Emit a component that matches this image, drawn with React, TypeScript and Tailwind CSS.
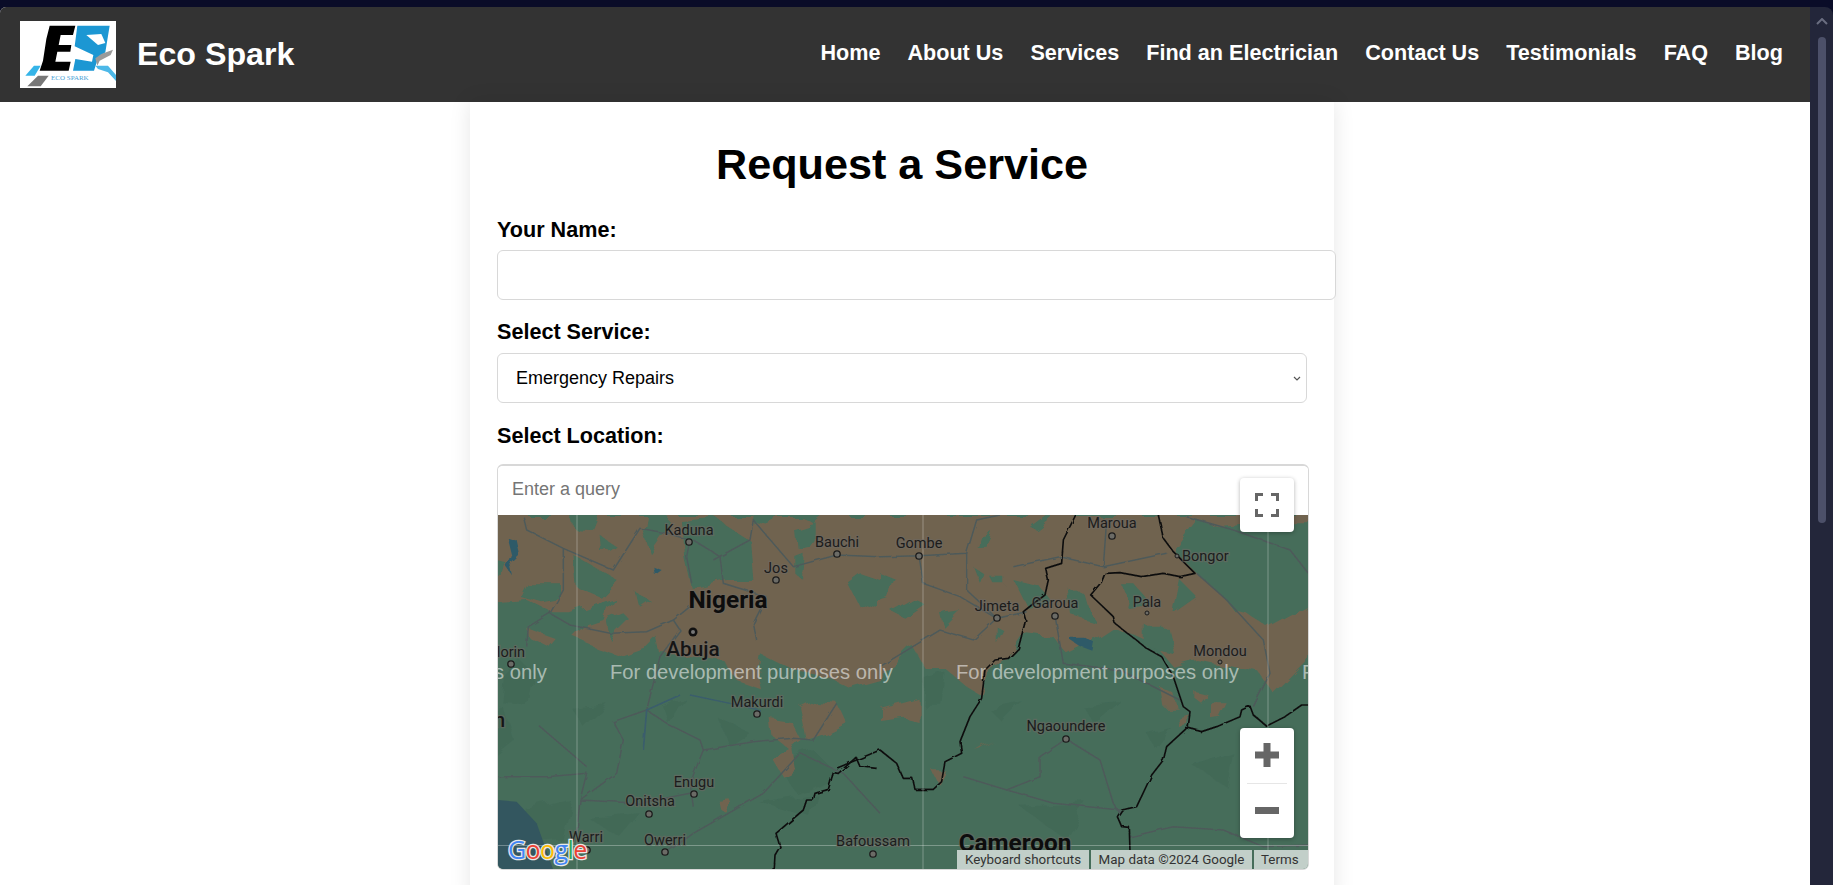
const brownLeft = [
  "60,225 1260,225 1260,720 1170,745 1120,720 1060,700 1000,690 900,640 890,700 900,745 830,720 790,660 720,650 650,640 600,640 590,590 560,620 490,645 400,615 340,590 370,560 430,540 460,470 330,520 280,520 200,480 60,490",
  "205,570 290,600 270,625 210,595",
  "1020,800 1060,780 1130,785 1160,850 1100,880 1040,900",
  "935,840 1000,850 1030,910 1000,930 1010,990 970,1010 940,960 990,930 940,890",
  "770,1080 805,1075 815,1090 795,1115 775,1100",
];

const greenLeft = [
  "330,215 420,215 400,265 340,262",
  "425,290 470,320 430,345",
  "560,215 640,215 620,270 570,340 550,270",
  "660,240 760,230 870,300 880,420 800,420 720,440 690,440 670,350",
  "340,345 470,420 420,470 350,440",
  "880,215 950,215 930,260 880,250",
  "1005,270 1070,250 1070,310 1010,320",
  "1000,345 1025,335 1020,410 1000,395",
  "60,350 140,370 130,410 60,410",
  "200,430 300,430 300,480 250,490 180,470",
  "440,540 490,520 510,540 450,600",
  "1160,430 1200,400 1260,420 1260,510 1190,490",
  "530,460 570,480 540,500",
  "1010,220 1100,220 1060,250",
];

const brownRight = [
  "0,225 1300,225 1300,250 1100,250 1000,260 950,240 880,330 950,400 1030,470 1060,510 1100,520 1170,570 1300,500 1300,640 1180,760 1140,700 1050,680 950,660 880,680 830,620 700,560 640,600 560,640 520,590 440,580 400,640 340,680 310,770 260,740 200,690 140,690 100,620 40,680 0,690",
  "0,800 110,770 110,840 70,830 0,840",
  "940,750 980,760 960,785 940,770",
  "990,790 1040,790 1020,830 990,835",
  "840,740 880,760 890,800 850,800",
  "285,930 335,900 300,925",
  "150,985 190,985 170,1025",
  "890,830 925,820 925,855 895,860",
];

const greenRight = [
  "300,290 340,280 320,320 290,320",
  "450,260 510,215 540,215 470,270",
  "280,380 310,400 300,430",
  "330,410 370,410 370,430 340,430",
  "400,420 480,440 520,490 440,500",
  "0,400 50,420 30,480 0,490",
  "30,510 100,470 130,490 70,530",
  "180,520 240,510 190,560",
  "350,560 370,570 350,610",
  "720,430 760,430 820,500 750,510",
  "900,420 950,470 880,520",
  "800,560 860,560 880,640 800,620",
  "560,440 620,470 640,540 570,520",
];

const roadsLeft = [
  "190,230 200,270 310,325 460,390 540,265 620,280 690,300 680,350 695,430",
  "310,325 310,450 270,520 205,560 200,620",
  "270,520 330,555 450,580 560,575 640,540 690,500",
  "640,540 660,570 600,650 560,810 620,850 720,900 730,930 690,1030 700,1100",
  "560,810 460,845 490,900 470,1000 360,1080 350,1180",
  "730,930 880,905 1000,895 1060,900 1130,790",
  "115,1010 260,1010 380,1000 360,1080 540,1090 690,1060",
  "760,360 870,300 880,240 1000,380 1130,345 1260,350",
  "890,600 880,550 920,470",
  "700,300 780,350 790,430 920,470",
  "910,1060 1020,940 1150,1000 1260,1120",
  "240,860 380,980",
  "615,1240 700,1180 910,1060",
];

const roadsRight = [
  "0,350 117,347 130,430 240,470 350,535 440,515",
  "117,347 260,340 290,240 360,225",
  "260,340 260,450 350,535 280,600 180,570 0,680",
  "400,380 540,350 670,380 860,340",
  "525,527 550,670 720,690 900,780",
  "680,240 670,380",
  "558,897 480,950 480,1010 380,1050 250,1010",
  "558,897 660,960 700,1090 720,1120",
  "380,1050 520,1090 720,1110",
  "950,400 1040,480 1150,600 1170,700 1120,800",
  "920,230 1060,270 1230,330 1285,400",
  "750,1190 880,1160 1030,1170 1150,1220 1285,1215",
];

const darkPatches = [
  "180,660 220,700 200,800 130,790 140,700",
  "30,850 130,800 160,900 60,980",
  "330,800 440,790 370,860",
  "600,790 670,770 620,850",
  "950,970 1060,930 1130,1000 1010,1060",
  "770,830 860,870 800,910",
  "200,1110 330,1080 300,1200 190,1210",
  "380,1130 540,1120 480,1190",
  "900,1090 1070,1060 1050,1130",
];

const darkPatchesRight = [
  "140,720 200,700 190,800 130,800",
  "330,810 430,790 370,850",
  "600,790 720,780 640,850",
  "940,980 1060,940 1040,1040",
  "420,1100 620,1090 560,1200",
  "800,880 870,860 820,920",
];

const borderLeft = [
  "942,1300 945,1245 960,1220 948,1180 1030,1110 1040,1080 1060,1080 1065,1060 1105,1048 1120,998 1135,1000 1188,952 1200,980 1250,985",
];

const borderRight = [
  "-130,985 0,930 50,970 70,1015 98,1015 105,1048 160,1048 185,1025 195,965 245,940 240,905 270,830 305,775 315,690 345,660 385,655 415,625 437,540 430,515 455,495 495,465 505,420 497,385 545,370 550,300 587,225",
  "835,225 850,295 880,335 945,400 900,410 850,400 785,410 720,398 675,400 665,425 632,465 700,530 705,550 800,625 845,650 880,710 910,800 930,815 925,860 860,920 850,960 815,1005 770,1100 725,1110 712,1130 725,1160 748,1162 750,1233",
  "915,862 965,875 1010,860 1080,830 1085,810 1110,798 1120,825 1160,858 1215,830 1265,795 1285,795",
];

const cities: [string, number, number, number, number][] = [
  ["Kaduna", 191, 70, 191, 77],
  ["Bauchi", 339, 82, 339, 89],
  ["Jos", 278, 108, 278, 115],
  ["Ilorin", 11, 192, 13, 199],
  ["Makurdi", 259, 242, 259, 249],
  ["Enugu", 196, 322, 196, 329],
  ["Onitsha", 152, 341, 151, 349],
  ["Warri", 88, 377, 89, 385],
  ["Owerri", 167, 380, 167, 387],
  ["Bafoussam", 375, 381, 375, 389],
  ["Gombe", 421, 83, 421, 91],
  ["Maroua", 614, 63, 614, 71],
  ["Jimeta", 499, 146, 499, 153],
  ["Garoua", 557, 143, 557, 151],
  ["Ngaoundere", 568, 266, 568, 274],
];

const smallCities: [string, number, number, number, number][] = [
  ["Pala", 649, 142, 649, 148],
  ["Mondou", 722, 191, 722, 197],
];

const navLinks = ["Home", "About Us", "Services", "Find an Electrician", "Contact Us", "Testimonials", "FAQ", "Blog"];

function Logo() {
  return (
    <svg viewBox="0 0 96 67" className="w-24 h-[67px] bg-white shrink-0">
      <g transform="translate(-2 -2) scale(0.33333)">
        <polygon points="95,20 172,20 165,48 128,48 122,78 160,78 157,98 118,98 112,128 158,128 152,155 65,155 75,125 85,60" fill="#000" />
        <polygon points="178,20 275,20 262,100 240,118 228,155 165,155 172,120 222,128 226,108 170,82" fill="#1c97d3" />
        <polygon points="205,48 250,45 262,72 240,78" fill="#fff" />
        <polygon points="232,118 250,105 285,92 278,108 245,125 238,140" fill="#9a9a9a" />
        <polygon points="232,140 270,140 300,175 298,190 270,160 240,150" fill="#4cb8e8" />
        <polygon points="22,170 48,140 68,140 50,170" fill="#35b4e8" />
        <polygon points="28,202 60,170 92,170 68,202" fill="#777" />
      </g>
      <text x="31" y="59" fontSize="7" fontFamily="'Liberation Serif', serif" fill="#4a9fd6">ECO SPARK</text>
    </svg>
  );
}

function MapArt() {
  const label = {
    fontFamily: "Roboto, sans-serif",
    paintOrder: "stroke",
    stroke: "rgba(110,105,100,0.55)",
    strokeWidth: 2.5,
  } as const;
  return (
    <svg viewBox="0 50 810 354" className="block w-full h-[354px] bg-[#466d5a]">
      <defs>
        <filter id="blobs" filterUnits="userSpaceOnUse" x="-30" y="20" width="870" height="415">
          <feTurbulence type="fractalNoise" baseFrequency="0.035" numOctaves="3" seed="4" />
          <feDisplacementMap in="SourceGraphic" scale="16" />
        </filter>
        <filter id="wobble" filterUnits="userSpaceOnUse" x="-30" y="20" width="870" height="415">
          <feTurbulence type="fractalNoise" baseFrequency="0.09" numOctaves="2" seed="9" />
          <feDisplacementMap in="SourceGraphic" scale="3" />
        </filter>
      </defs>

      <g filter="url(#blobs)">
        <g transform="translate(-38 -25) scale(0.33333)">
          {darkPatches.map((p) => <polygon key={p} points={p} fill="#426957" />)}
          {brownLeft.map((p) => <polygon key={p} points={p} fill="#70644f" />)}
          {greenLeft.map((p) => <polygon key={p} points={p} fill="#466d5a" />)}
          <polygon points="140,290 170,300 180,345 155,370 165,415 140,380 155,350" fill="#2f5a68" />
          <polygon points="580,380 605,390 585,405" fill="#2f5a68" />
        </g>
        <g transform="translate(382 -25) scale(0.33333)">
          {darkPatchesRight.map((p) => <polygon key={p} points={p} fill="#426957" />)}
          {brownRight.map((p) => <polygon key={p} points={p} fill="#70644f" />)}
          {greenRight.map((p) => <polygon key={p} points={p} fill="#466d5a" />)}
          <polygon points="570,590 610,590 645,610 640,635 600,620 570,600" fill="#2f5a68" />
        </g>
      </g>

      <g transform="translate(-38 -25) scale(0.33333)">
        <polygon points="60,1075 170,1085 230,1150 280,1290 60,1290" fill="#33565f" />
      </g>

      <g filter="url(#wobble)">
        <g transform="translate(-38 -25) scale(0.33333)">
          {roadsLeft.map((p) => <polyline key={p} points={p} fill="none" stroke="#4e5a5a" strokeWidth="4.5" />)}
          <polyline points="660,765 560,810 550,930" fill="none" stroke="#3a5d6c" strokeWidth="5" />
          <polyline points="690,765 810,790 900,810" fill="none" stroke="#3a5d6c" strokeWidth="4" />
          {borderLeft.map((p) => <polyline key={p} points={p} fill="none" stroke="#111" strokeWidth="5" strokeLinejoin="round" />)}
        </g>
        <g transform="translate(382 -25) scale(0.33333)">
          {roadsRight.map((p) => <polyline key={p} points={p} fill="none" stroke="#4e5a5a" strokeWidth="4.5" />)}
          {borderRight.map((p) => <polyline key={p} points={p} fill="none" stroke="#111" strokeWidth="5" strokeLinejoin="round" />)}
        </g>
      </g>

      {[79, 425, 770].map((x) => <line key={x} x1={x} y1="50" x2={x} y2="405" stroke="#fff" strokeOpacity="0.3" />)}
      <line x1="0" y1="380.5" x2="810" y2="380.5" stroke="#fff" strokeOpacity="0.3" />

      {cities.map(([name, tx, ty, dx, dy]) => (
        <g key={name}>
          <circle cx={dx} cy={dy} r="3.2" fill="#6b6b66" stroke="#1c1c1c" strokeWidth="1.3" />
          <text x={tx} y={ty} textAnchor="middle" fontSize="14.5" fill="#1c1c1c" style={label}>{name}</text>
        </g>
      ))}
      {smallCities.map(([name, tx, ty, dx, dy]) => (
        <g key={name}>
          <circle cx={dx} cy={dy} r="2" fill="#6b6b66" stroke="#1c1c1c" strokeWidth="1" />
          <text x={tx} y={ty} textAnchor="middle" fontSize="14.5" fill="#1c1c1c" style={label}>{name}</text>
        </g>
      ))}
      <circle cx="679" cy="91" r="2" fill="#6b6b66" stroke="#1c1c1c" />
      <text x="684" y="96" fontSize="14.5" fill="#1c1c1c" style={label}>Bongor</text>

      <text x="230" y="143" textAnchor="middle" fontSize="24.4" fontWeight="700" fill="#0d0d0d" style={label}>Nigeria</text>
      <circle cx="195" cy="167" r="4.5" fill="#111" />
      <circle cx="195" cy="167" r="2" fill="#777" />
      <text x="195" y="191" textAnchor="middle" fontSize="20.8" fontWeight="500" fill="#151515" style={label}>Abuja</text>
      <text x="-4" y="262" fontSize="20" fontWeight="500" fill="#151515" style={label}>n</text>
      <text x="517" y="386" textAnchor="middle" fontSize="24.3" fontWeight="700" fill="#0d0d0d" style={label}>Cameroon</text>

      {[-234, 112, 458, 804].map((x) => (
        <text key={x} x={x} y="214" fontSize="20.2" fill="#fff" fillOpacity="0.55" fontFamily="'Liberation Sans', Arial, sans-serif">
          For development purposes only
        </text>
      ))}

      <text
        x="10"
        y="394"
        fontSize="25"
        fontWeight="500"
        letterSpacing="-0.6"
        fontFamily="'Open Sans', sans-serif"
        stroke="#e8e8e8"
        strokeWidth="2.5"
        style={{ paintOrder: "stroke" }}
      >
        <tspan fill="#4285f4">G</tspan>
        <tspan fill="#ea4335">o</tspan>
        <tspan fill="#fbbc05">o</tspan>
        <tspan fill="#4285f4">g</tspan>
        <tspan fill="#34a853">l</tspan>
        <tspan fill="#ea4335">e</tspan>
      </text>
    </svg>
  );
}

function MapPanel() {
  return (
    <div className="relative w-[812px] border border-[#d8d8d8] border-t-2 rounded-md overflow-hidden">
      <input
        placeholder="Enter a query"
        className="block w-full h-[49px] px-[14px] pb-[3px] text-[18px] bg-white outline-none placeholder:text-[#757575]"
      />
      <MapArt />

      <button className="absolute top-[12px] right-[14px] w-[54px] h-[54px] flex items-center justify-center bg-white rounded-sm shadow-[0_1px_4px_rgba(0,0,0,0.3)]">
        <svg viewBox="0 0 24 24" className="w-6 h-6" fill="none" stroke="#666" strokeWidth="3">
          <path d="M1.5 8V1.5H8M16 1.5H22.5V8M22.5 16V22.5H16M8 22.5H1.5V16" />
        </svg>
      </button>

      <div className="absolute top-[262px] right-[14px] w-[54px] h-[110px] flex flex-col items-center bg-white rounded-sm shadow-[0_1px_4px_rgba(0,0,0,0.3)]">
        <svg viewBox="0 0 24 24" className="w-6 h-6 mt-[15px]" fill="#666">
          <path d="M8.5 0h7v8.5H24v7h-8.5V24h-7v-8.5H0v-7h8.5z" />
        </svg>
        <div className="w-10 h-px bg-[#e6e6e6] mt-4" />
        <svg viewBox="0 0 24 7" className="w-6 h-[7px] mt-[23px]" fill="#666">
          <rect width="24" height="7" />
        </svg>
      </div>

      <div className="absolute bottom-0 right-0 h-[19px] flex gap-[2px] text-[13.4px] leading-[19px] text-[#333] font-['Roboto',sans-serif] whitespace-nowrap">
        <span className="w-[132px] text-center bg-[#c2cfc9]">Keyboard shortcuts</span>
        <span className="w-[161px] text-center bg-[#c2cfc9]">Map data ©2024 Google</span>
        <span className="w-[54px] pl-[7px] bg-[#c2cfc9]">Terms</span>
      </div>
    </div>
  );
}

export default function App() {
  return (
    <div className="h-[885px] overflow-hidden flex flex-col bg-[#0a0c28] font-['Liberation_Sans',Arial,sans-serif]">
      <div className="h-[7px] shrink-0" />
      <div className="flex-1 flex min-h-0">
        <div className="flex-1 min-w-0 bg-white rounded-tl-md overflow-hidden">
          <header className="h-[95px] flex items-center justify-between pl-5 pr-[27px] bg-[#333]">
            <div className="flex items-center gap-[21px]">
              <Logo />
              <span className="pb-[1px] text-[32.2px] font-bold text-white">Eco Spark</span>
            </div>
            <nav className="flex items-center gap-[27px] pb-[3px] text-[21.6px] font-bold text-white">
              {navLinks.map((item) => <a key={item} href="#">{item}</a>)}
            </nav>
          </header>

          <main className="ml-[470px] w-[864px] h-[800px] px-[27px] pt-[37px] bg-white shadow-[0_0_20px_rgba(0,0,0,0.1)]">
            <h1 className="text-center text-[43.2px] leading-[50px] font-bold text-black">Request a Service</h1>
            <label className="block mt-[29px] mb-2 text-[21.6px] leading-6 font-bold text-black">Your Name:</label>
            <input className="block w-[839px] h-[50px] px-4 border border-[#d8d8d8] rounded-md bg-white" />
            <label className="block mt-5 mb-[9px] text-[21.6px] leading-6 font-bold text-black">Select Service:</label>
            <div className="relative w-[810px]">
              <select className="block w-full h-[50px] pl-[18px] pr-8 text-[18px] border border-[#d8d8d8] rounded-md bg-white text-black appearance-none">
                <option>Emergency Repairs</option>
              </select>
              <svg viewBox="0 0 8 5" className="absolute right-[6px] top-[23px] w-2 h-[5px] pointer-events-none" fill="none" stroke="#555" strokeWidth="1.2">
                <path d="M1 1l3 3 3-3" />
              </svg>
            </div>
            <label className="block mt-[21px] mb-4 text-[21.6px] leading-6 font-bold text-black">Select Location:</label>
            <MapPanel />
          </main>
        </div>

        <aside className="w-[23px] shrink-0 flex flex-col items-center bg-[#23263a] rounded-tr-lg">
          <svg viewBox="0 0 12 7" className="w-3 h-[7px] mt-[11px]" fill="none" stroke="#6a6d80" strokeWidth="2">
            <path d="M1 6l5-5 5 5" />
          </svg>
          <div className="w-2 h-[486px] mt-[12px] rounded-full bg-[#4c5069]" />
        </aside>
      </div>
    </div>
  );
}
